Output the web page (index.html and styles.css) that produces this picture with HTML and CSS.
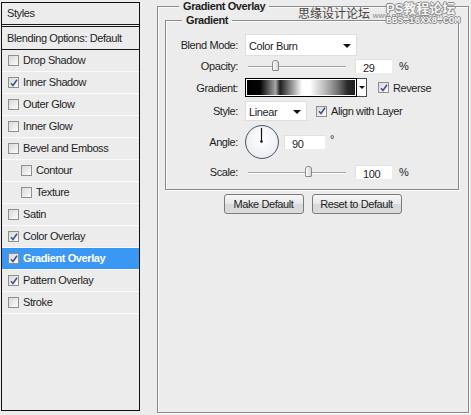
FILE: index.html
```html
<!DOCTYPE html>
<html>
<head>
<meta charset="utf-8">
<link rel="stylesheet" href="styles.css">
</head>
<body>
<div class="dialog">
  <div class="styles-panel">
    <div class="panel-title">Styles</div>
    <div class="panel-blend">Blending Options: Default</div>
    <ul class="fx-list">
      <li class="fx"><span class="cb"></span>Drop Shadow</li>
      <li class="fx"><span class="cb"><svg viewBox="0 0 8 8"><path d="M1 4.2 L3 6.5 L7 0.8" /></svg></span>Inner Shadow</li>
      <li class="fx"><span class="cb"></span>Outer Glow</li>
      <li class="fx"><span class="cb"></span>Inner Glow</li>
      <li class="fx"><span class="cb"></span>Bevel and Emboss</li>
      <li class="fx sub"><span class="cb"></span>Contour</li>
      <li class="fx sub"><span class="cb"></span>Texture</li>
      <li class="fx"><span class="cb"></span>Satin</li>
      <li class="fx"><span class="cb"><svg viewBox="0 0 8 8"><path d="M1 4.2 L3 6.5 L7 0.8" /></svg></span>Color Overlay</li>
      <li class="fx selected"><span class="cb"><svg viewBox="0 0 8 8"><path d="M1 4.2 L3 6.5 L7 0.8" /></svg></span>Gradient Overlay</li>
      <li class="fx"><span class="cb"><svg viewBox="0 0 8 8"><path d="M1 4.2 L3 6.5 L7 0.8" /></svg></span>Pattern Overlay</li>
      <li class="fx"><span class="cb"></span>Stroke</li>
    </ul>
  </div>

  <fieldset class="group outer">
    <legend>Gradient Overlay</legend>
    <fieldset class="group inner">
      <legend>Gradient</legend>
      <div class="form">
        <div class="row row-blend">
          <span class="lbl">Blend Mode:</span>
          <div class="select select-blend"><span>Color Burn</span><i class="arrow"></i></div>
        </div>
        <div class="row row-opacity">
          <span class="lbl">Opacity:</span>
          <div class="slider"><span class="thumb" style="left:24px"></span></div>
          <div class="num">29</div>
          <span class="unit">%</span>
        </div>
        <div class="row row-grad">
          <span class="lbl">Gradient:</span>
          <div class="grad"><div class="grad-swatch"></div><div class="grad-drop"><i class="arrow"></i></div></div>
          <label class="check"><span class="cb"><svg viewBox="0 0 8 8"><path d="M1 4.2 L3 6.5 L7 0.8" /></svg></span>Reverse</label>
        </div>
        <div class="row row-style">
          <span class="lbl">Style:</span>
          <div class="select select-style"><span>Linear</span><i class="arrow"></i></div>
          <label class="check align"><span class="cb"><svg viewBox="0 0 8 8"><path d="M1 4.2 L3 6.5 L7 0.8" /></svg></span>Align with Layer</label>
        </div>
        <div class="row row-angle">
          <span class="lbl">Angle:</span>
          <div class="dial"><svg viewBox="0 0 34 34"><line x1="17" y1="17" x2="17" y2="2" /><circle cx="17" cy="17" r="1.4" /></svg></div>
          <div class="num num-angle">90</div>
          <span class="deg">°</span>
        </div>
        <div class="row row-scale">
          <span class="lbl">Scale:</span>
          <div class="slider"><span class="thumb" style="left:57px"></span></div>
          <div class="num">100</div>
          <span class="unit">%</span>
        </div>
      </div>
    </fieldset>
    <div class="buttons">
      <button class="btn btn-make">Make Default</button>
      <button class="btn btn-reset">Reset to Default</button>
    </div>
  </fieldset>

  <div class="watermark">
    <span class="wm-cn">思缘设计论坛 <span class="wm-url">www.missyuan.com</span></span>
    <span class="wm-ps"><span class="wm-ps1">PS教程论坛</span><span class="wm-ps2">BBS.16XX8.COM</span></span>
  </div>
</div>
</body>
</html>
```

FILE: styles.css
```css
html, body {
  margin: 0;
  padding: 0;
  background: #ececec;
}
body {
  font-family: "Liberation Sans", Arial, "Noto Sans CJK SC", sans-serif;
  font-size: 11px;
  letter-spacing: -0.4px;
  color: #1e1e1e;
}
.dialog {
  position: relative;
  width: 471px;
  height: 415px;
  display: flex;
  align-items: flex-start;
  overflow: hidden;
}

/* ---------- left styles list ---------- */
.styles-panel {
  box-sizing: border-box;
  margin: 2px 0 0 1px;
  width: 139px;
  height: 409px;
  border: 1px solid #111;
  background: #ececec;
  display: flex;
  flex-direction: column;
}
.panel-title {
  height: 21px;
  line-height: 20px;
  padding-left: 5px;
  border-bottom: 3px double #1a1a1a;
}
.panel-blend {
  height: 22px;
  line-height: 22px;
  padding-left: 5px;
  border-bottom: 1px solid #1a1a1a;
}
.fx-list {
  list-style: none;
  margin: 0;
  padding: 0;
}
.fx {
  height: 21px;
  line-height: 21px;
  border-bottom: 1px solid #fbfbfb;
  display: flex;
  align-items: center;
  padding-left: 6px;
}
.fx.sub {
  padding-left: 19px;
}
.fx.selected {
  background: #3a98f4;
  color: #fff;
  font-weight: bold;
}
.cb {
  box-sizing: border-box;
  width: 11px;
  height: 11px;
  border: 1px solid #8f8f8f;
  background: linear-gradient(135deg, #d9d9d9, #fbfbfb);
  margin-right: 4px;
  flex: none;
  display: flex;
  align-items: center;
  justify-content: center;
}
.cb svg {
  width: 8px;
  height: 8px;
}
.cb path {
  fill: none;
  stroke: #3f5488;
  stroke-width: 1.6;
}

/* ---------- group boxes ---------- */
.group {
  margin: 0;
  border: 1px solid #8a8a8a;
  box-shadow: inset 1px 1px 0 #fafafa, 1px 1px 0 #fafafa;
}
.group > legend {
  font-weight: bold;
  line-height: 13px;
  padding: 0 4px;
  background: #ececec;
}
.outer {
  box-sizing: border-box;
  margin-left: 17px;
  width: 312px;
  height: 413px;
  padding: 1px 9px 0 7px;
}
.outer > legend {
  margin-left: 14px;
}
.inner {
  width: 294px;
  box-sizing: border-box;
  padding: 7px 0 9px 0;
}
.inner > legend {
  margin-left: 16px;
}

/* ---------- form rows ---------- */
.form {
  display: flex;
  flex-direction: column;
}
.row {
  display: flex;
  align-items: center;
}
.lbl {
  width: 72px;
  text-align: right;
  margin-right: 7px;
  flex: none;
}
.row-blend { height: 22px; }
.row-opacity { height: 18px; margin-top: 1px; }
.row-grad { height: 19px; margin-top: 3px; }
.row-style { height: 20px; margin-top: 4px; }
.row-angle { height: 34px; margin-top: 4px; }
.row-scale { height: 16px; margin-top: 5px; }

.select {
  box-sizing: border-box;
  height: 100%;
  background: #fff;
  border: 1px solid #dedede;
  display: flex;
  align-items: center;
  justify-content: space-between;
  padding: 2px 5px 0 3px;
}
.select-blend { width: 112px; }
.select-style { width: 62px; }
.arrow {
  width: 0;
  height: 0;
  border-left: 4px solid transparent;
  border-right: 4px solid transparent;
  border-top: 4px solid #111;
}

.slider {
  position: relative;
  width: 98px;
  height: 14px;
  margin-left: 3px;
}
.slider::before {
  content: "";
  position: absolute;
  left: 0;
  right: 0;
  top: 7px;
  height: 1px;
  background: #a4a4a4;
  box-shadow: 0 1px 0 #fff;
}
.thumb {
  position: absolute;
  top: 1px;
  width: 7px;
  height: 11px;
  box-sizing: border-box;
  border: 1px solid #8a8a8a;
  border-radius: 3px 3px 1px 1px;
  background: linear-gradient(to right, #fdfdfd, #d6d6d6);
}
.num {
  box-sizing: border-box;
  width: 37px;
  height: 14px;
  line-height: 14px;
  background: #fff;
  border-top: 1px solid #e2e2e2;
  border-left: 1px solid #e2e2e2;
  padding: 1px 0 0 7px;
  margin-left: 9px;
}
.unit {
  margin-left: 7px;
}

.grad {
  display: flex;
  height: 19px;
}
.grad-swatch {
  box-sizing: border-box;
  width: 112px;
  height: 19px;
  border: 1px solid #000;
  box-shadow: inset 0 0 0 1px #fff;
  background: linear-gradient(to right,
    #000 0%, #050505 13%, #a6a6a6 27%, #1e1e1e 31%,
    #8d8d8d 41%, #fefefe 51%, #ffffff 58%, #b9b9b9 72%,
    #6f6f6f 84%, #2b2b2b 92%, #1d1d1d 100%);
}
.grad-drop {
  box-sizing: border-box;
  width: 10px;
  height: 19px;
  border: 1px solid #4a4a4a;
  border-left: none;
  background: #fff;
  display: flex;
  align-items: center;
  justify-content: center;
}
.grad-drop .arrow {
  border-left-width: 3px;
  border-right-width: 3px;
  border-top-width: 3px;
}
.check {
  display: flex;
  align-items: center;
  margin-left: 11px;
}
.check .cb {
  margin-right: 4px;
}
.check.align {
  margin-left: 9px;
}

.dial {
  width: 34px;
  height: 34px;
  box-sizing: border-box;
  border: 1.5px solid #515a6e;
  border-radius: 50%;
  background: radial-gradient(circle at 50% 40%, #ffffff, #e6e8ec);
  box-shadow: inset 0 0 1px #9aa;
}
.dial svg {
  display: block;
  width: 31px;
  height: 31px;
}
.dial line {
  stroke: #111;
  stroke-width: 1.3;
}
.dial circle {
  fill: #111;
}
.num-angle {
  width: 41px;
  margin-left: 5px;
}
.deg {
  margin-left: 5px;
  align-self: flex-start;
  margin-top: 8px;
}

/* ---------- buttons ---------- */
.buttons {
  display: flex;
  justify-content: center;
  gap: 8px;
  margin-top: 4px;
  padding-left: 1px;
}
.btn {
  font: inherit;
  letter-spacing: inherit;
  color: #1e1e1e;
  height: 20px;
  padding: 0;
  border: 1px solid #7c7c7c;
  border-radius: 3px;
  background: linear-gradient(#f7f7f7, #e8e8e8 50%, #d8d8d8 51%, #dcdcdc);
}
.btn-make { width: 80px; }
.btn-reset { width: 90px; }

/* ---------- watermark ---------- */
.watermark {
  position: absolute;
  left: 298px;
  top: 0;
  width: 170px;
  height: 30px;
  pointer-events: none;
}
.wm-cn {
  position: absolute;
  left: 0;
  top: 5px;
  white-space: nowrap;
  font-family: "Noto Sans CJK SC", sans-serif;
  font-size: 12px;
  line-height: 16px;
  letter-spacing: 0;
  color: #444;
}
.wm-url {
  font-family: "Liberation Sans", sans-serif;
  font-size: 8px;
  color: #888;
}
.wm-ps {
  position: absolute;
  left: 88px;
  top: 2px;
  width: 76px;
  display: flex;
  flex-direction: column;
  align-items: flex-start;
  white-space: nowrap;
  letter-spacing: 0;
  color: #f4f4f4;
  text-shadow: 1px 0 0 #8a8a8a, -1px 0 0 #8a8a8a, 0 1px 0 #8a8a8a, 0 -1px 0 #8a8a8a;
}
.wm-ps1 {
  font-family: "Liberation Sans", "Noto Sans CJK SC", sans-serif;
  font-weight: bold;
  font-size: 13px;
  line-height: 13px;
}
.wm-ps2 {
  font-family: "Liberation Mono", monospace;
  font-weight: bold;
  font-size: 9.5px;
  line-height: 12px;
}
```
